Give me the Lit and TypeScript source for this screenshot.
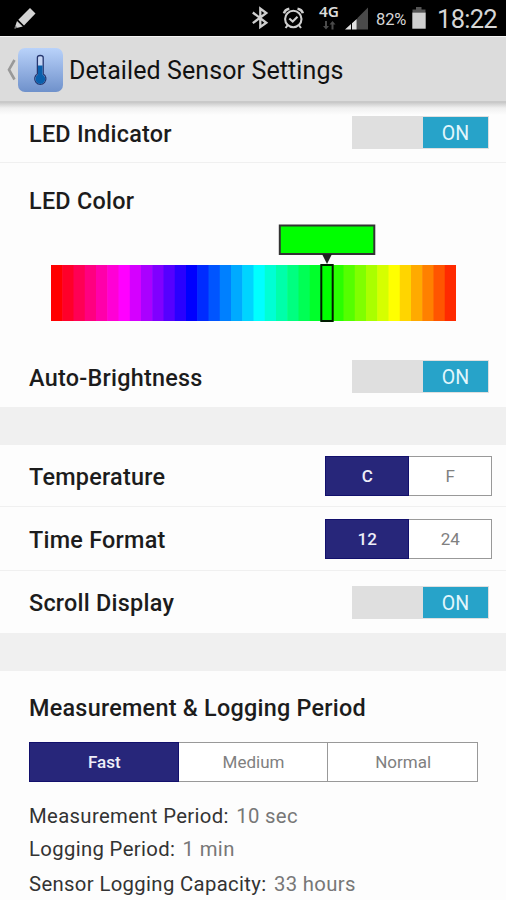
import { LitElement, html, css, svg } from "lit";
import { customElement, property } from "lit/decorators.js";
import { classMap } from "lit/directives/class-map.js";

@customElement("status-bar")
class StatusBar extends LitElement {
  static styles = css`
    :host { display: flex; flex: none; height: 36px; background: #000; color: #d6d6d6; box-sizing: border-box; padding: 0 9px 0 14px; align-items: stretch; }
    svg { display: block; flex: none; }
    .grow { flex: 1; }
    .glyphs { width: 137px; height: 36px; }
    .glyphs text { font: 600 15px "Noto Sans", "Liberation Sans", sans-serif; fill: #dcdcdc; }
    .pct { width: 35px; font-size: 16.5px; line-height: 39px; white-space: nowrap; letter-spacing: -0.1px; }
    .battery { width: 26px; height: 36px; }
    .clock { font-size: 25.5px; line-height: 39px; width: 60px; white-space: nowrap; letter-spacing: -0.7px; }
  `;
  render() {
    return html`
      <svg width="24" height="36" viewBox="14 0 24 36">
        <path d="M30 8 L35.5 13.5 L24 25.5 L18.3 19.8 Z" fill="#d4d4d4" />
        <path d="M17 21 L22.8 26.6 L14.5 28.5 Z" fill="#d4d4d4" />
        <path d="M14.5 28.5 L15.2 25.3 L17.6 27.7 Z" fill="#777" />
      </svg>
      <div class="grow"></div>
      <svg class="glyphs" viewBox="239 0 137 36">
        <path d="M252.8 12.5 L266.3 22.8 L260.3 27 V8.5 L266.3 13 L252.8 23.2" fill="none" stroke="#cfcfcf" stroke-width="2.3" />
        <g fill="none" stroke="#cfcfcf" stroke-width="2.1">
          <circle cx="293.3" cy="19" r="8.2" />
          <path d="M289.3 18.5 L292.7 21.6 L297.5 16.8" />
          <path d="M284 13.3 Q285 9.5 289.3 8.7 M297.5 8.7 Q301.9 9.5 302.8 13.3" stroke-width="2.6" />
          <path d="M287.8 25 L285.6 28 M298.8 25 L301 28" />
        </g>
        <text x="319" y="17.2" textLength="20" lengthAdjust="spacingAndGlyphs">4G</text>
        <g fill="#4a4a4a">
          <path d="M325 21h2v5h2l-3 3.5l-3-3.5h2z M331.5 29.5h2v-5h2l-3-3.5l-3 3.5h2z" />
          <path d="M368 7.5 V29.5 H357 V18.5 Z" />
        </g>
        <path d="M345 29.5 L351 24 V29.5 Z M352 23.3 L356.7 19 V29.5 H352 Z" fill="#e0e0e0" />
      </svg>
      <div class="pct">82%</div>
      <svg class="battery" viewBox="411 0 26 36">
        <path d="M412.5 9.5 H416 V7 H421.5 V9.5 H425.5 V12.5 H412.5 Z" fill="#555" />
        <rect x="412.3" y="12.5" width="13.4" height="16.2" fill="#d0d0d0" />
      </svg>
      <div class="clock">18:22</div>
    `;
  }
}

@customElement("title-bar")
class TitleBar extends LitElement {
  static styles = css`
    :host { display: flex; flex: none; align-items: center; height: 67px; box-sizing: border-box; padding: 2px 0 0 6px; background: #dcdcdc; border-top: 1px solid #f4f4f4; border-bottom: 2px solid #c9c9c9; }
    svg { display: block; flex: none; }
    .title { margin-left: 5px; padding-top: 2px; font-size: 25px; line-height: 30px; color: #111; letter-spacing: 0.1px; white-space: nowrap; }
  `;
  render() {
    return html`
      <svg width="58" height="46" viewBox="6 46.5 58 46">
        <defs>
          <linearGradient id="tile" x1="0" y1="0" x2="0" y2="1">
            <stop offset="0" stop-color="#b9d2fa" /><stop offset="1" stop-color="#6f91cb" />
          </linearGradient>
        </defs>
        <path d="M14.5 59.5 L9 69.2 L14.5 79" fill="none" stroke="#999" stroke-width="2.6" />
        <rect x="18" y="47.5" width="45" height="44" rx="7" fill="url(#tile)" />
        <path d="M37.4 57 Q37.4 55 40.3 55 Q43.2 55 43.2 57 V73.5 A5.6 5.6 0 1 1 37.4 73.5 Z" fill="#c4d4f4" stroke="#25366f" stroke-width="1.3" />
        <path d="M38 65 H42.6 V74 A5 5 0 1 1 38 74 Z" fill="#0a5fac" />
      </svg>
      <div class="title">Detailed Sensor Settings</div>
    `;
  }
}

@customElement("toggle-switch")
class ToggleSwitch extends LitElement {
  static styles = css`
    :host { display: flex; box-sizing: border-box; width: 137px; height: 33px; padding: 1px 1px 1px 71px; background: #dfdfdf; }
    .thumb { flex: 1; background: #27a3c9; color: #e2f6fc; font-size: 19.5px; line-height: 33px; text-align: center; }
  `;
  render() {
    return html`<div class="thumb">ON</div>`;
  }
}

@customElement("segmented-control")
class SegmentedControl extends LitElement {
  @property({ attribute: false }) options: string[] = [];
  @property({ type: Number }) selected = 0;
  static styles = css`
    :host { display: grid; grid-auto-flow: column; grid-auto-columns: minmax(0, 1fr); box-sizing: border-box; height: 39px; color: #808080; font-size: 17px; }
    .seg { box-sizing: border-box; border: 1.5px solid #999; line-height: 38px; text-align: center; background: #fff; }
    .seg + .seg { border-left: 0; padding-left: 1px; }
    .seg.on { background: #27267a; border: 1px solid #12106c; padding-left: 1px; color: #eeeef8; font-weight: 500; }
  `;
  render() {
    return this.options.map(
      (o, i) => html`<div class=${classMap({ seg: true, on: i === this.selected })}>${o}</div>`
    );
  }
}

@customElement("color-spectrum")
class ColorSpectrum extends LitElement {
  static styles = css`
    :host { display: block; }
    svg { display: block; }
  `;
  render() {
    const steps = 36;
    const w = 405 / steps;
    return html`
      <svg width="405" height="99" viewBox="0 0 405 99">
        ${Array.from({ length: steps }, (_, i) => svg`
          <rect x=${i * w} y="41" width=${w + (i < steps - 1 ? 0.6 : 0)} height="56" fill=${`hsl(${(360 - i * 10) % 360} 100% 50%)`} />`)}
        <rect x="228.8" y="1.5" width="94.5" height="28.5" fill="#00ff00" stroke="#333" stroke-width="2" />
        <path d="M271 30 H281 L276 40 Z" fill="#222" />
        <rect x="270.3" y="41" width="11.4" height="56" fill="#00ff00" stroke="#001c00" stroke-width="2" />
      </svg>
    `;
  }
}

@customElement("app-root")
class AppRoot extends LitElement {
  static styles = css`
    :host { display: flex; flex-direction: column; height: 900px; overflow: hidden; background: #fdfdfd; color: #1c1c1c; font-family: Roboto, "Liberation Sans", sans-serif; }
    .row { flex: none; display: flex; align-items: center; justify-content: space-between; box-sizing: border-box; padding-left: 29px; padding-right: 17px; border-bottom: 1px solid #f0f0f0; }
    .row.last { border-bottom: 0; }
    .row.seg { padding-right: 14px; }
    .row .label { padding-top: 2px; }
    .row.seg .label { padding-top: 3px; }
    .row.scroll .label { padding-top: 1px; }
    .indicator { height: 60px; background: linear-gradient(#cdcdcd, #f0f0f0 5px, #fdfdfd 12px); }
    .auto { height: 60px; padding-bottom: 1px; }
    .temp { height: 62px; }
    .time { height: 64px; }
    .scroll { height: 62px; }
    .label { font-size: 23.4px; line-height: 28px; font-weight: 500; letter-spacing: 0.25px; white-space: nowrap; }
    .led { flex: none; height: 184px; box-sizing: border-box; padding: 24px 0 0 29px; }
    .led color-spectrum { margin: 9px 0 0 22px; }
    .band { flex: none; height: 38px; background: #f0f0f0; }
    .pair { width: 167px; }
    .logging { padding: 23px 28px 0 29px; }
    .triple { margin-top: 20px; }
    .facts { margin-top: 19px; font-size: 20.3px; letter-spacing: 0.35px; color: #777; }
    .fact { line-height: 32px; height: 33px; white-space: nowrap; }
    .fact:last-child { padding-top: 2px; }
    .name { color: #333; margin-right: 2px; }
  `;
  render() {
    return html`
      <status-bar></status-bar>
      <title-bar></title-bar>
      <div class="row indicator"><span class="label">LED Indicator</span><toggle-switch></toggle-switch></div>
      <div class="led"><div class="label">LED Color</div><color-spectrum></color-spectrum></div>
      <div class="row last auto"><span class="label">Auto-Brightness</span><toggle-switch></toggle-switch></div>
      <div class="band"></div>
      <div class="row seg temp"><span class="label">Temperature</span><segmented-control class="pair" .options=${["C", "F"]}></segmented-control></div>
      <div class="row seg time"><span class="label">Time Format</span><segmented-control class="pair" .options=${["12", "24"]}></segmented-control></div>
      <div class="row last scroll"><span class="label">Scroll Display</span><toggle-switch></toggle-switch></div>
      <div class="band"></div>
      <div class="logging">
        <div class="label">Measurement &amp; Logging Period</div>
        <segmented-control class="triple" .options=${["Fast", "Medium", "Normal"]}></segmented-control>
        <div class="facts">
          <div class="fact"><span class="name">Measurement Period:</span> 10 sec</div>
          <div class="fact"><span class="name">Logging Period:</span> 1 min</div>
          <div class="fact"><span class="name">Sensor Logging Capacity:</span> 33 hours</div>
        </div>
      </div>
    `;
  }
}
